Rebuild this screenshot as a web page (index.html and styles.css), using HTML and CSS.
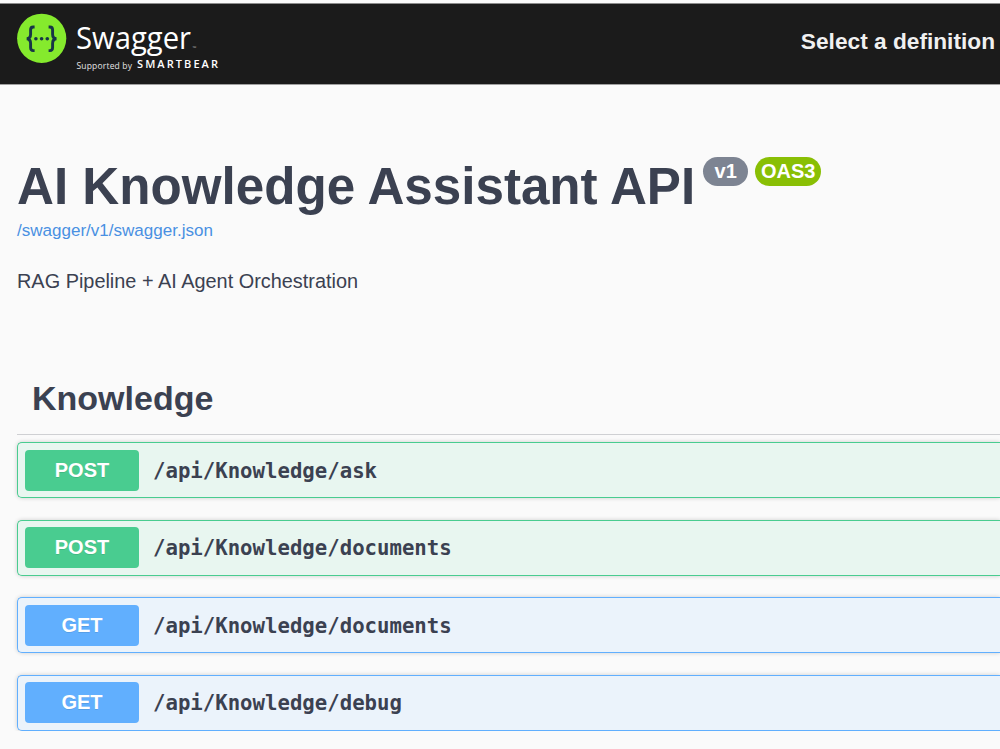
FILE: index.html
```html
<!DOCTYPE html>
<html lang="en">
<head>
  <meta charset="UTF-8">
  <meta name="viewport" content="width=device-width, initial-scale=1.0">
  <title>Swagger UI</title>
  <link rel="stylesheet" href="styles.css">
</head>
<body>
  <header class="topbar">
    <a class="logo" href="#">
      <svg width="206" height="66" viewBox="0 0 206 66">
        <circle cx="24.7" cy="27.3" r="24.6" fill="#85ea2d"/>
        <g fill="none" stroke="#173647" stroke-width="2.9">
          <path d="M17.6 16h-1.4q-2.6 0-2.6 3v4.2q0 4.2-3.8 4.6q3.8.4 3.8 4.6v4.2q0 3 2.6 3h1.4"/>
          <path d="M31.6 16h1.4q2.6 0 2.6 3v4.2q0 4.2 3.8 4.6q-3.8.4-3.8 4.6v4.2q0 3-2.6 3h-1.4"/>
        </g>
        <g fill="#173647">
          <circle cx="18.9" cy="27.8" r="1.8"/>
          <circle cx="24.6" cy="27.8" r="1.8"/>
          <circle cx="30.3" cy="27.8" r="1.8"/>
        </g>
        <text class="logo-name" x="59" y="37.5" textLength="115" lengthAdjust="spacingAndGlyphs">Swagger</text>
        <text class="logo-tm" x="175.5" y="39">™</text>
        <text class="logo-by" x="59.5" y="57.5" textLength="55.5">Supported by</text>
        <text class="logo-brand" x="120" y="57" textLength="81">SMARTBEAR</text>
      </svg>
    </a>
    <label class="select-label">Select a definition</label>
  </header>

  <main class="wrapper">
    <section class="info">
      <h2 class="title">AI Knowledge Assistant API<span class="badges"><small class="version">v1</small><small class="version oas">OAS3</small></span></h2>
      <a class="link" href="#">/swagger/v1/swagger.json</a>
      <p class="description">RAG Pipeline + AI Agent Orchestration</p>
    </section>

    <section class="tag-section">
      <h3 class="tag">Knowledge</h3>
      <div class="operations">
        <div class="opblock post">
          <span class="method">POST</span>
          <span class="path">/api/Knowledge/ask</span>
        </div>
        <div class="opblock post">
          <span class="method">POST</span>
          <span class="path">/api/Knowledge/documents</span>
        </div>
        <div class="opblock get">
          <span class="method">GET</span>
          <span class="path">/api/Knowledge/documents</span>
        </div>
        <div class="opblock get">
          <span class="method">GET</span>
          <span class="path">/api/Knowledge/debug</span>
        </div>
      </div>
    </section>
  </main>
</body>
</html>
```
FILE: styles.css
```css
* {
  box-sizing: border-box;
}
body {
  margin: 0;
  padding-top: 3px;
  background: #fafafa;
  color: #3b4151;
  font-family: "Liberation Sans", Arial, sans-serif;
  overflow: hidden;
}
.topbar {
  display: flex;
  justify-content: space-between;
  height: 82px;
  padding: 10px 5px 0 17px;
  background: #1b1b1b;
  border-top: 1px solid #8c8c8c;
  border-bottom: 1px solid #a0a0a0;
}
.logo svg {
  display: block;
  margin-top: -3px;
}
.logo-name {
  font: 400 31px "Open Sans", sans-serif;
  fill: #fff;
}
.logo-tm {
  font: 5px "Open Sans", sans-serif;
  fill: #aaa;
}
.logo-by {
  font: 8.5px "Open Sans", sans-serif;
  fill: #e4e4e4;
}
.logo-brand {
  font: 600 11px "Open Sans", sans-serif;
  fill: #fff;
}
.select-label {
  padding-top: 14px;
  color: #f0f0f0;
  font-size: 22.7px;
  font-weight: bold;
  line-height: 26px;
}
.wrapper {
  padding: 72px 0 0 17px;
}
.title {
  display: flex;
  align-items: flex-start;
  margin: 0;
  font-size: 51.15px;
  line-height: 60px;
  white-space: nowrap;
}
.badges {
  display: flex;
  gap: 7px;
  margin-left: 8px;
}
.version {
  height: 29px;
  width: 45px;
  border-radius: 15px;
  background: #7d8492;
  color: #fff;
  font-size: 20px;
  line-height: 28px;
  text-align: center;
}
.oas {
  width: 66px;
  background: #89bf04;
}
.link {
  display: block;
  margin-top: 4px;
  color: #4990e2;
  font-size: 17.05px;
  line-height: 20px;
  text-decoration: none;
}
.description {
  margin: 28px 0 0;
  font-size: 19.9px;
  line-height: 24px;
}
.tag {
  height: 63px;
  margin: 79px 0 0;
  padding: 6px 15px;
  border-bottom: 1px solid #cfd0d3;
  font-size: 34px;
  line-height: 40px;
}
.operations {
  display: flex;
  flex-direction: column;
  gap: 21.5px;
  padding-top: 7px;
}
.opblock {
  display: flex;
  align-items: center;
  height: 56px;
  padding: 0 7px;
  border: 1px solid;
  border-right: 0;
  border-radius: 5px 0 0 5px;
  box-shadow: 0 0 4px rgba(0, 0, 0, .19);
}
.post {
  background: #e8f6f0;
  border-color: #49cc90;
}
.get {
  background: #ebf3fb;
  border-color: #61affe;
}
.method {
  width: 114px;
  height: 41px;
  border-radius: 4px;
  color: #fff;
  font-size: 20px;
  font-weight: bold;
  line-height: 40px;
  text-align: center;
  text-shadow: 0 1px 0 rgba(0, 0, 0, .1);
}
.post .method {
  background: #49cc90;
}
.get .method {
  background: #61affe;
}
.path {
  padding: 1px 0 0 14px;
  font-family: "DejaVu Sans Mono", monospace;
  font-size: 20.68px;
  font-weight: bold;
}
```
